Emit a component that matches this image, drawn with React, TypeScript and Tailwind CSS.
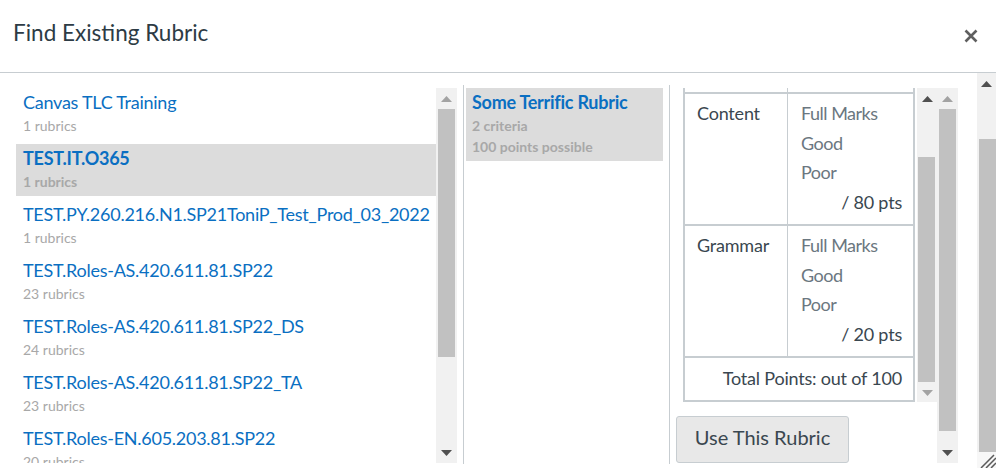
const courses = [
  { name: "Canvas TLC Training", count: "1 rubrics" },
  { name: "TEST.IT.O365", count: "1 rubrics", selected: true },
  { name: "TEST.PY.260.216.N1.SP21ToniP_Test_Prod_03_2022", count: "1 rubrics" },
  { name: "TEST.Roles-AS.420.611.81.SP22", count: "23 rubrics" },
  { name: "TEST.Roles-AS.420.611.81.SP22_DS", count: "24 rubrics" },
  { name: "TEST.Roles-AS.420.611.81.SP22_TA", count: "23 rubrics" },
  { name: "TEST.Roles-EN.605.203.81.SP22", count: "20 rubrics" },
];

const criteria = [
  { name: "Content", points: "/ 80 pts", height: "h-[132px]" },
  { name: "Grammar", points: "/ 20 pts", height: "h-[132px]" },
];

function Arrow({ up, color }: { up?: boolean; color: string }) {
  return (
    <svg width="11" height="6" viewBox="0 0 11 6" className={color}>
      <polygon points={up ? "5.5,0 11,6 0,6" : "0,0 11,0 5.5,6"} fill="currentColor" />
    </svg>
  );
}

function Scrollbar({
  className,
  thumbClass,
  upColor = "text-[#a3a3a3]",
  downColor = "text-[#505050]",
}: {
  className: string;
  thumbClass: string;
  upColor?: string;
  downColor?: string;
}) {
  return (
    <div className={`flex shrink-0 flex-col bg-[#f1f1f1] ${className}`}>
      <div className="flex h-[21px] shrink-0 items-center justify-center">
        <Arrow up color={upColor} />
      </div>
      <div className="flex-1 px-[2px]">
        <div className={`bg-[#c1c1c1] ${thumbClass}`} />
      </div>
      <div className="flex h-[21px] shrink-0 items-center justify-center">
        <Arrow color={downColor} />
      </div>
    </div>
  );
}

export default function App() {
  return (
    <div className="relative flex h-[468px] w-[996px] flex-col overflow-hidden bg-white font-['Lato',sans-serif] text-[#2d3b45]">
      {/* Header */}
      <div className="flex h-[73px] shrink-0 items-start justify-between border-b border-[#c7cdd1] pl-[13px] pr-[18px]">
        <h1 className="mt-[17px] text-[22.5px] leading-[32px]">Find Existing Rubric</h1>
        <svg width="14" height="14" viewBox="0 0 14 14" className="mt-[29px] text-[#5f5f5f]">
          <path d="M1.5 1.5L12.5 12.5M12.5 1.5L1.5 12.5" stroke="currentColor" strokeWidth="2.6" />
        </svg>
      </div>

      <div className="flex min-h-0 flex-1">
        <div className="flex min-w-0 flex-1 pl-[16px]">
          {/* Course list */}
          <div className="mt-[15px] mb-[5px] flex w-[441px] shrink-0">
            <div className="w-[420px] overflow-hidden">
              {courses.map((c) => (
                <div
                  key={c.name}
                  className={`mb-[4px] h-[52px] px-[7px] pt-[2px] ${c.selected ? "bg-[#dcdcdc]" : ""}`}
                >
                  <div className={`text-[18px] leading-[24px] tracking-[-0.26px] whitespace-nowrap text-[#0a6fc2] ${c.selected ? "font-bold" : ""}`}>
                    {c.name}
                  </div>
                  <div className={`text-[14px] leading-[24px] text-[#a8a8a8] ${c.selected ? "font-bold" : ""}`}>
                    {c.count}
                  </div>
                </div>
              ))}
            </div>
            <Scrollbar className="w-[21px]" thumbClass="h-[248px]" />
          </div>

          {/* Rubric list */}
          <div className="mt-[12px] mb-[4px] ml-[6px] w-[207px] shrink-0 border-x border-[#c7cdd1] pl-[2px] pt-[3px]">
            <div className="w-[197px] bg-[#dcdcdc] px-[6px] pt-[2px] pb-[4px]">
              <div className="mb-[1px] text-[18px] leading-[24px] font-bold tracking-[-0.26px] text-[#0a6fc2]">Some Terrific Rubric</div>
              <div className="text-[14px] leading-[21px] font-bold text-[#a8a8a8]">2 criteria</div>
              <div className="text-[14px] leading-[21px] font-bold text-[#a8a8a8]">100 points possible</div>
            </div>
          </div>

          {/* Rubric preview */}
          <div className="mt-[15px] ml-[6px] w-[261px] shrink-0">
            <div className="ml-[7px] flex h-[314px] w-[254px]">
              <div className="h-full w-[232px] border-x-2 border-b-2 border-[#c7cdd1] text-[18px] tracking-[-0.2px] text-[#3a4750]">
                <div className="ml-[102px] h-[4px] w-px bg-[#c7cdd1]" />
                {criteria.map((row) => (
                  <div key={row.name} className={`flex border-t-2 border-[#c7cdd1] ${row.height}`}>
                    <div className="w-[103px] shrink-0 border-r border-[#c7cdd1] pl-[12px] pt-[5px] leading-[29.5px]">
                      {row.name}
                    </div>
                    <div className="flex-1 pl-[13px] pr-[11px] pt-[5px] leading-[29.5px]">
                      <div className="tracking-[-0.5px] text-[#6b7780]">Full Marks</div>
                      <div className="tracking-[-0.5px] text-[#6b7780]">Good</div>
                      <div className="tracking-[-0.5px] text-[#6b7780]">Poor</div>
                      <div className="text-right">{row.points}</div>
                    </div>
                  </div>
                ))}
                <div className="border-t-2 border-[#c7cdd1] pr-[11px] pt-[6px] text-right leading-[29.5px]">
                  Total Points: out of 100
                </div>
              </div>
              <Scrollbar
                className="ml-[2px] w-[20px]"
                thumbClass="mt-[48px] -ml-px h-[225px]"
                upColor="text-[#505050]"
                downColor="text-[#a3a3a3]"
              />
            </div>
            <button className="mt-[14px] h-[47px] w-[173px] rounded-[3px] border border-[#c7cdd1] bg-[#e8e8e8] pb-[5px] text-[20px] text-[#3a4750]">
              Use This Rubric
            </button>
          </div>

          <Scrollbar className="mt-[15px] mb-[5px] w-[21px]" thumbClass="h-[322px]" />
        </div>

        {/* Page scrollbar */}
        <Scrollbar
          className="w-[19px]"
          thumbClass="mt-[45px] -mr-[2px] h-[313px]"
          upColor="text-[#505050]"
          downColor="text-transparent"
        />
      </div>

      {/* Resize handle */}
      <svg width="19" height="16" viewBox="0 0 19 16" className="absolute right-0 bottom-0 bg-[#f7f7f7] text-[#5a5a5a]">
        <path d="M4 16L17 3M9 16L19 6M14 16L19 11" stroke="currentColor" strokeWidth="1.5" fill="none" />
      </svg>
    </div>
  );
}
